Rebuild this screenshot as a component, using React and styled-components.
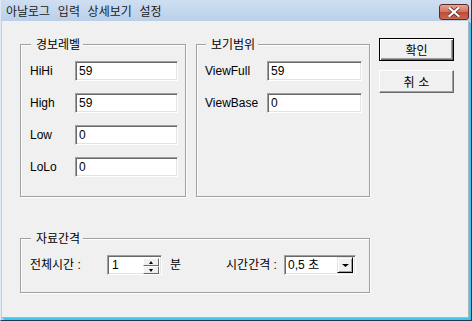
import React from 'react';
import styled, { createGlobalStyle } from 'styled-components';

const Global = createGlobalStyle`
  html, body { margin: 0; padding: 0; background: #f0f0f0; }
  body { font-family: "Liberation Sans", "Noto Sans CJK KR", sans-serif; font-size: 12px; color: #000; }
`;

const Window = styled.div`
  width: 472px;
  height: 321px;
  box-sizing: border-box;
  display: flex;
  flex-direction: column;
  background: linear-gradient(#cfdff1, #b9cfe8 22px, #b9cfe8);
  border-right: 1px solid #23374f;
  border-bottom: 1px solid #23374f;
  border-left: 1px solid #dfeaf6;
  overflow: hidden;
`;

const TitleBar = styled.div`
  height: 21px;
  display: flex;
  align-items: center;
  justify-content: space-between;
  padding: 0 2px 0 5px;
  flex-shrink: 0;
`;

const Title = styled.div`
  font-family: "Noto Sans CJK KR", sans-serif;
  font-size: 12px;
  line-height: 14px;
  word-spacing: 5px;
  color: #1b1b1b;
`;

const CloseButton = styled.div`
  width: 28px;
  height: 14px;
  margin-top: 3px;
  border: 1px solid #5d2a2a;
  border-radius: 3px;
  background: linear-gradient(#e8a593, #d0705c 50%, #bd4a36 51%, #c9694f);
  display: flex;
  align-items: center;
  justify-content: center;
`;

const Client = styled.div`
  flex: 1;
  margin: 0 2px 2px 1px;
  background: #f0f0f0;
  border-right: 1px solid #a9b6c4;
  border-bottom: 1px solid #a9b6c4;
  box-shadow: 1px 1px 0 #3cc6f0, 2px 2px 0 #3cc6f0;
  display: flex;
  padding: 16px 0 0 18px;
  gap: 9px;
`;

const MainColumn = styled.div`
  display: flex;
  flex-direction: column;
  gap: 34px;
`;

const TopRow = styled.div`
  display: flex;
  gap: 10px;
`;

const Group = styled.fieldset`
  margin: 0;
  box-sizing: border-box;
  width: ${p => p.$w}px;
  height: ${p => p.$h}px;
  padding: ${p => p.$pad};
  border: 1px solid #a0a0a0;
  box-shadow: inset 1px 1px 0 #fff, 1px 1px 0 #fff;
  min-inline-size: 0;
`;

const Caption = styled.legend`
  font-family: "Noto Sans CJK KR", sans-serif;
  font-size: 12px;
  line-height: 14px;
  padding: 0 3px 0 5px;
  margin-left: 1px;
  background: #f0f0f0;
`;

const Rows = styled.div`
  display: flex;
  flex-direction: column;
  gap: 12px;
`;

const Row = styled.div`
  display: flex;
  align-items: center;
`;

const Label = styled.span`
  width: ${p => p.$w}px;
  flex-shrink: 0;
  font-size: 12px;
  line-height: 14px;
  white-space: nowrap;
`;

const Field = styled.div`
  box-sizing: border-box;
  width: ${p => p.$w}px;
  height: 20px;
  background: #fff;
  border: 1px solid;
  border-color: #a0a0a0 #fff #fff #a0a0a0;
  box-shadow: inset 1px 1px 0 #696969, inset -1px -1px 0 #e3e3e3;
  padding: 2px 0 0 3px;
  font-size: 12px;
  line-height: 14px;
  display: flex;
  align-items: flex-start;
`;

const SpinField = styled(Field)`
  padding: 2px 2px 0 4px;
  justify-content: space-between;
`;

const SpinArrows = styled.div`
  display: flex;
  flex-direction: column;
  width: 16px;
`;

const SpinBtn = styled.div`
  height: 8px;
  background: #f0f0f0;
  border: 1px solid;
  border-color: #fff #696969 #696969 #fff;
  box-sizing: border-box;
  display: flex;
  align-items: center;
  justify-content: center;
`;

const ComboField = styled(Field)`
  padding: 2px 2px 0 3px;
  justify-content: space-between;
`;

const DropBtn = styled.div`
  width: 16px;
  height: 16px;
  margin-top: -1px;
  box-sizing: border-box;
  background: #f0f0f0;
  border: 1px solid;
  border-color: #e3e3e3 #000 #000 #e3e3e3;
  box-shadow: inset 1px 1px 0 #fff, inset -1px -1px 0 #a0a0a0;
  display: flex;
  align-items: center;
  justify-content: center;
`;

const Unit = styled.span`
  font-size: 12px;
  line-height: 14px;
  margin: 0 ${p => p.$mr}px 0 ${p => p.$ml}px;
`;

const ButtonColumn = styled.div`
  display: flex;
  flex-direction: column;
  gap: 9px;
  padding-top: 1px;
`;

const Button = styled.div`
  box-sizing: border-box;
  width: 75px;
  height: 23px;
  background: #f0f0f0;
  border: 1px solid;
  border-color: ${p => (p.$default ? '#000' : '#fff #696969 #696969 #fff')};
  box-shadow: ${p =>
    p.$default
      ? 'inset 1px 1px 0 #fff, inset -1px -1px 0 #696969, inset -2px -2px 0 #a0a0a0'
      : 'inset -1px -1px 0 #a0a0a0'};
  display: flex;
  align-items: center;
  justify-content: center;
  font-family: "Noto Sans CJK KR", sans-serif;
  font-size: 12px;
  line-height: 14px;
  word-spacing: 1px;
`;

const Tri = ({ up = true, w = 5 }) => (
  <svg width={w} height="3" viewBox={`0 0 ${w} 3`}>
    <polygon points={up ? `0,3 ${w},3 ${w / 2},0` : `0,0 ${w},0 ${w / 2},3`} fill="#000" />
  </svg>
);

export default function App() {
  const alarms = [
    ['HiHi', '59'],
    ['High', '59'],
    ['Low', '0'],
    ['LoLo', '0'],
  ];
  const views = [
    ['ViewFull', '59'],
    ['ViewBase', '0'],
  ];
  return (
    <>
      <Global />
      <Window>
        <TitleBar>
          <Title>아날로그 입력 상세보기 설정</Title>
          <CloseButton>
            <svg width="12" height="10" viewBox="0 0 12 10">
              <path d="M1.5 1 L10.5 9 M10.5 1 L1.5 9" stroke="#4a2020" strokeWidth="3.6" strokeLinecap="square" />
              <path d="M1.5 1 L10.5 9 M10.5 1 L1.5 9" stroke="#fff" strokeWidth="2.2" strokeLinecap="square" />
            </svg>
          </CloseButton>
        </TitleBar>
        <Client>
          <MainColumn>
            <TopRow>
              <Group $w={166} $h={160} $pad="10px 0 0 9px">
                <Caption>경보레벨</Caption>
                <Rows>
                  {alarms.map(([k, v]) => (
                    <Row key={k}>
                      <Label $w={45}>{k}</Label>
                      <Field $w={103}>{v}</Field>
                    </Row>
                  ))}
                </Rows>
              </Group>
              <Group $w={174} $h={160} $pad="10px 0 0 8px">
                <Caption>보기범위</Caption>
                <Rows>
                  {views.map(([k, v]) => (
                    <Row key={k}>
                      <Label $w={62}>{k}</Label>
                      <Field $w={95}>{v}</Field>
                    </Row>
                  ))}
                </Rows>
              </Group>
            </TopRow>
            <Group $w={350} $h={62} $pad="10px 0 0 9px">
              <Caption>자료간격</Caption>
              <Row>
                <Label $w={77}>전체시간 :</Label>
                <SpinField $w={55}>
                  <span>1</span>
                  <SpinArrows>
                    <SpinBtn><Tri up w={4} /></SpinBtn>
                    <SpinBtn><Tri up={false} w={4} /></SpinBtn>
                  </SpinArrows>
                </SpinField>
                <Unit $ml={8} $mr={45}>분</Unit>
                <Label $w={58}>시간간격 :</Label>
                <ComboField $w={72}>
                  <span>0,5 초</span>
                  <DropBtn><Tri up={false} w={7} /></DropBtn>
                </ComboField>
              </Row>
            </Group>
          </MainColumn>
          <ButtonColumn>
            <Button $default>확인</Button>
            <Button>취 소</Button>
          </ButtonColumn>
        </Client>
      </Window>
    </>
  );
}
